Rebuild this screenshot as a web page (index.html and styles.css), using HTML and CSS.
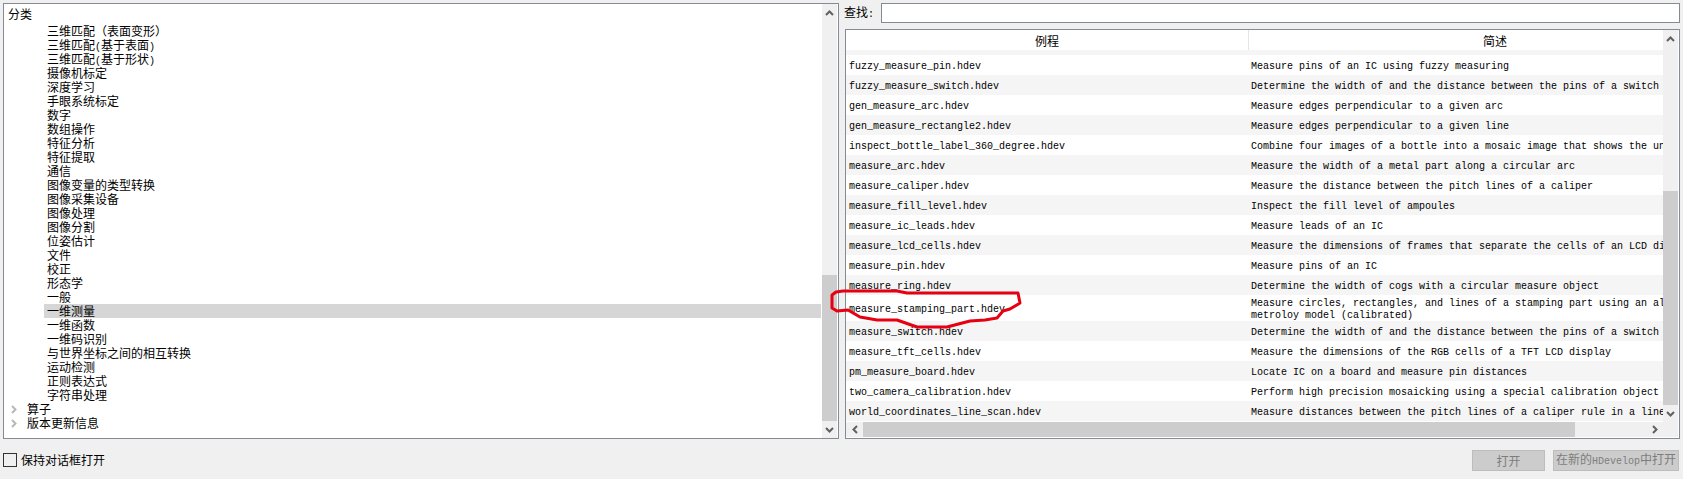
FILE: index.html
```html
<!DOCTYPE html>
<html lang="zh-CN">
<head>
<meta charset="utf-8">
<title>例程</title>
<link rel="stylesheet" href="styles.css">
</head>
<body>
<div class="main">
  <section class="tree-panel">
    <div class="tree">
      <div class="tree-header">分类</div>
      <div class="item">三维匹配（表面变形）</div>
      <div class="item">三维匹配<span class="lat">(</span>基于表面<span class="lat">)</span></div>
      <div class="item">三维匹配<span class="lat">(</span>基于形状<span class="lat">)</span></div>
      <div class="item">摄像机标定</div>
      <div class="item">深度学习</div>
      <div class="item">手眼系统标定</div>
      <div class="item">数字</div>
      <div class="item">数组操作</div>
      <div class="item">特征分析</div>
      <div class="item">特征提取</div>
      <div class="item">通信</div>
      <div class="item">图像变量的类型转换</div>
      <div class="item">图像采集设备</div>
      <div class="item">图像处理</div>
      <div class="item">图像分割</div>
      <div class="item">位姿估计</div>
      <div class="item">文件</div>
      <div class="item">校正</div>
      <div class="item">形态学</div>
      <div class="item">一般</div>
      <div class="item selected">一维测量</div>
      <div class="item">一维函数</div>
      <div class="item">一维码识别</div>
      <div class="item">与世界坐标之间的相互转换</div>
      <div class="item">运动检测</div>
      <div class="item">正则表达式</div>
      <div class="item">字符串处理</div>
      <div class="branch"><svg class="tree-chev" viewBox="0 0 6 9"><path d="M1 1l3.500 3.500L1 8"/></svg><span>算子</span></div>
      <div class="branch"><svg class="tree-chev" viewBox="0 0 6 9"><path d="M1 1l3.500 3.500L1 8"/></svg><span>版本更新信息</span></div>
    </div>
    <div class="vscroll tree-scroll">
      <div class="arrow"><svg class="chev" viewBox="0 0 9 6"><path d="M1 5l3.500-3.500L8 5"/></svg></div>
      <div class="track"><div class="thumb tree-thumb"></div></div>
      <div class="arrow"><svg class="chev" viewBox="0 0 9 6"><path d="M1 1l3.500 3.500L8 1"/></svg></div>
    </div>
  </section>

  <section class="right">
    <div class="search">
      <label class="search-label" for="q">查找<span class="lat">:</span></label>
      <input class="search-input" id="q" type="text">
    </div>
    <div class="table">
      <div class="table-body">
        <div class="grid">
          <div class="head">
            <div class="head-a">例程</div>
            <div class="head-b">简述</div>
          </div>
          <div class="band"></div>
          <div class="row"><div class="a">fuzzy_measure_pin.hdev</div><div class="b">Measure pins of an IC using fuzzy measuring</div></div>
          <div class="row alt"><div class="a">fuzzy_measure_switch.hdev</div><div class="b">Determine the width of and the distance between the pins of a switch</div></div>
          <div class="row"><div class="a">gen_measure_arc.hdev</div><div class="b">Measure edges perpendicular to a given arc</div></div>
          <div class="row alt"><div class="a">gen_measure_rectangle2.hdev</div><div class="b">Measure edges perpendicular to a given line</div></div>
          <div class="row"><div class="a">inspect_bottle_label_360_degree.hdev</div><div class="b">Combine four images of a bottle into a mosaic image that shows the unwrapped label</div></div>
          <div class="row alt"><div class="a">measure_arc.hdev</div><div class="b">Measure the width of a metal part along a circular arc</div></div>
          <div class="row"><div class="a">measure_caliper.hdev</div><div class="b">Measure the distance between the pitch lines of a caliper</div></div>
          <div class="row alt"><div class="a">measure_fill_level.hdev</div><div class="b">Inspect the fill level of ampoules</div></div>
          <div class="row"><div class="a">measure_ic_leads.hdev</div><div class="b">Measure leads of an IC</div></div>
          <div class="row alt"><div class="a">measure_lcd_cells.hdev</div><div class="b">Measure the dimensions of frames that separate the cells of an LCD display</div></div>
          <div class="row"><div class="a">measure_pin.hdev</div><div class="b">Measure pins of an IC</div></div>
          <div class="row alt"><div class="a">measure_ring.hdev</div><div class="b">Determine the width of cogs with a circular measure object</div></div>
          <div class="row tall"><div class="a">measure_stamping_part.hdev</div><div class="b">Measure circles, rectangles, and lines of a stamping part using an aligned metroloy model (calibrated)</div></div>
          <div class="row alt"><div class="a">measure_switch.hdev</div><div class="b">Determine the width of and the distance between the pins of a switch</div></div>
          <div class="row"><div class="a">measure_tft_cells.hdev</div><div class="b">Measure the dimensions of the RGB cells of a TFT LCD display</div></div>
          <div class="row alt"><div class="a">pm_measure_board.hdev</div><div class="b">Locate IC on a board and measure pin distances</div></div>
          <div class="row"><div class="a">two_camera_calibration.hdev</div><div class="b">Perform high precision mosaicking using a special calibration object</div></div>
          <div class="row alt"><div class="a">world_coordinates_line_scan.hdev</div><div class="b">Measure distances between the pitch lines of a caliper rule in a line scan</div></div>
        </div>
        <div class="vscroll table-scroll">
          <div class="arrow"><svg class="chev" viewBox="0 0 9 6"><path d="M1 5l3.500-3.500L8 5"/></svg></div>
          <div class="track"><div class="thumb table-thumb"></div></div>
          <div class="arrow"><svg class="chev" viewBox="0 0 9 6"><path d="M1 1l3.500 3.500L8 1"/></svg></div>
        </div>
      </div>
      <div class="hscroll">
        <div class="harrow"><svg class="hchev" viewBox="0 0 6 9"><path d="M5 1L1.500 4.500 5 8"/></svg></div>
        <div class="hthumb"></div>
        <div class="htrack"></div>
        <div class="harrow"><svg class="hchev" viewBox="0 0 6 9"><path d="M1 1l3.500 3.500L1 8"/></svg></div>
        <div class="corner"></div>
      </div>
    </div>
  </section>
</div>

<footer class="footer">
  <label class="keep"><input class="check" type="checkbox"><span>保持对话框打开</span></label>
  <div class="actions">
    <button class="btn btn-open" type="button" disabled>打开</button>
    <button class="btn btn-new" type="button" disabled>在新的<span class="lat">HDevelop</span>中打开</button>
  </div>
</footer>

<svg class="scribble" viewBox="0 0 1683 479" aria-hidden="true">
  <path d="M843 291L897 291L907 293L1018 293L1020 303L1010 309L1003 311L997 318L985 320L970 321L947 327L917 327L897 320L877 320L860 317L848 310L837 311L832 308L832 295L836 292Z"/>
</svg>
</body>
</html>
```

FILE: styles.css
```css
* {
  box-sizing: border-box;
}

html,
body {
  margin: 0;
  height: 479px;
  overflow: hidden;
}

body {
  padding: 3px 3px 0;
  background: #f0f0f0;
  color: #000;
  font: 12px/14px "Noto Sans CJK SC", sans-serif;
}

.lat {
  font-family: "Liberation Mono", monospace;
  font-size: 10px;
}

.main {
  display: flex;
  height: 436px;
}

/* left tree */
.tree-panel {
  display: flex;
  width: 836px;
  border: 1px solid #858b92;
  background: #fff;
}

.tree {
  width: 818px;
  overflow: hidden;
}

.tree-header {
  height: 20px;
  padding: 3px 0 0 4px;
}

.item {
  height: 14px;
  margin-right: 1px;
  padding-left: 43px;
  white-space: nowrap;
}

.selected {
  margin-left: 40px;
  padding-left: 3px;
  background: #d6d6d6;
}

.branch {
  display: flex;
  align-items: center;
  height: 14px;
  padding-left: 7px;
}

.tree-chev {
  width: 6px;
  height: 9px;
  margin-right: 10px;
  fill: none;
  stroke: #b8b8b8;
  stroke-width: 2;
}

/* scroll bars */
.vscroll {
  display: flex;
  flex-direction: column;
  background: #f0f0f0;
}

.tree-scroll {
  width: 15px;
  margin-right: 1px;
}

.table-scroll {
  width: 15px;
}

.arrow {
  display: flex;
  flex: none;
  align-items: center;
  justify-content: center;
  height: 17px;
}

.chev {
  width: 9px;
  height: 6px;
  fill: none;
  stroke: #606060;
  stroke-width: 2;
}

.track {
  display: flex;
  flex: 1;
  flex-direction: column;
  justify-content: flex-end;
}

.thumb {
  background: #cdcdcd;
}

.tree-thumb {
  height: 146px;
}

.table-thumb {
  height: 214px;
}

/* right side */
.right {
  display: flex;
  flex-direction: column;
  width: 837px;
  margin-left: 5px;
}

.search {
  display: flex;
  align-items: center;
  height: 20px;
  margin-bottom: 6px;
}

.search-label {
  width: 37px;
  flex: none;
}

.search-input {
  width: 799px;
  height: 20px;
  padding: 0 2px;
  border: 1px solid #858b92;
  border-radius: 0;
  outline: none;
  background: #fff;
}

.table {
  display: flex;
  flex-direction: column;
  width: 835px;
  height: 410px;
  margin-left: 1px;
  padding: 0 1px 1px 0;
  border: 1px solid #858b92;
  background: #fff;
}

.table-body {
  display: flex;
  height: 392px;
}

.grid {
  width: 817px;
  overflow: hidden;
}

.head {
  display: flex;
  width: 895px;
  height: 20px;
}

.head-a {
  width: 403px;
  padding-top: 4px;
  border-right: 1px solid #e5e5e5;
  text-align: center;
}

.head-b {
  width: 492px;
  padding-top: 4px;
  text-align: center;
}

.band {
  height: 5px;
  background: #f5f5f5;
}

.row {
  display: flex;
  align-items: center;
  width: 895px;
  height: 20px;
  padding-top: 3px;
  font-family: "Liberation Mono", monospace;
  font-size: 10px;
  line-height: 12px;
}

.alt {
  background: #f5f5f5;
}

.tall {
  height: 26px;
}

.a {
  width: 403px;
  padding-left: 3px;
  white-space: nowrap;
}

.b {
  width: 492px;
  padding-left: 2px;
  white-space: nowrap;
}

.tall .b {
  white-space: normal;
}

.hscroll {
  display: flex;
  height: 15px;
  background: #f0f0f0;
}

.harrow {
  display: flex;
  flex: none;
  align-items: center;
  justify-content: center;
  width: 17px;
}

.hchev {
  width: 6px;
  height: 9px;
  fill: none;
  stroke: #606060;
  stroke-width: 2;
}

.hthumb {
  width: 712px;
  background: #cdcdcd;
}

.htrack {
  width: 71px;
}

.corner {
  width: 15px;
  background: #f0f0f0;
}

/* footer */
.footer {
  display: flex;
  align-items: flex-start;
  justify-content: space-between;
  height: 40px;
  padding: 11px 1px 0 0;
}

.keep {
  display: flex;
  align-items: center;
  height: 20px;
}

.check {
  width: 14px;
  height: 14px;
  margin: 0 4px 0 0;
  border: 1px solid #333;
  background: #f0f0f0;
  appearance: none;
}

.actions {
  display: flex;
  gap: 8px;
}

.btn {
  height: 21px;
  padding: 0;
  border: 1px solid #bdbdbd;
  background: #ccc;
  color: #7d7d7d;
  font: inherit;
}

.btn-open {
  width: 73px;
}

.btn-new {
  width: 126px;
}

/* hand-drawn mark laid over the screenshot */
.scribble {
  position: absolute;
  top: 0;
  left: 0;
  width: 1683px;
  height: 479px;
  pointer-events: none;
  fill: none;
  stroke: #e60012;
  stroke-width: 3;
  stroke-linejoin: round;
}
```
